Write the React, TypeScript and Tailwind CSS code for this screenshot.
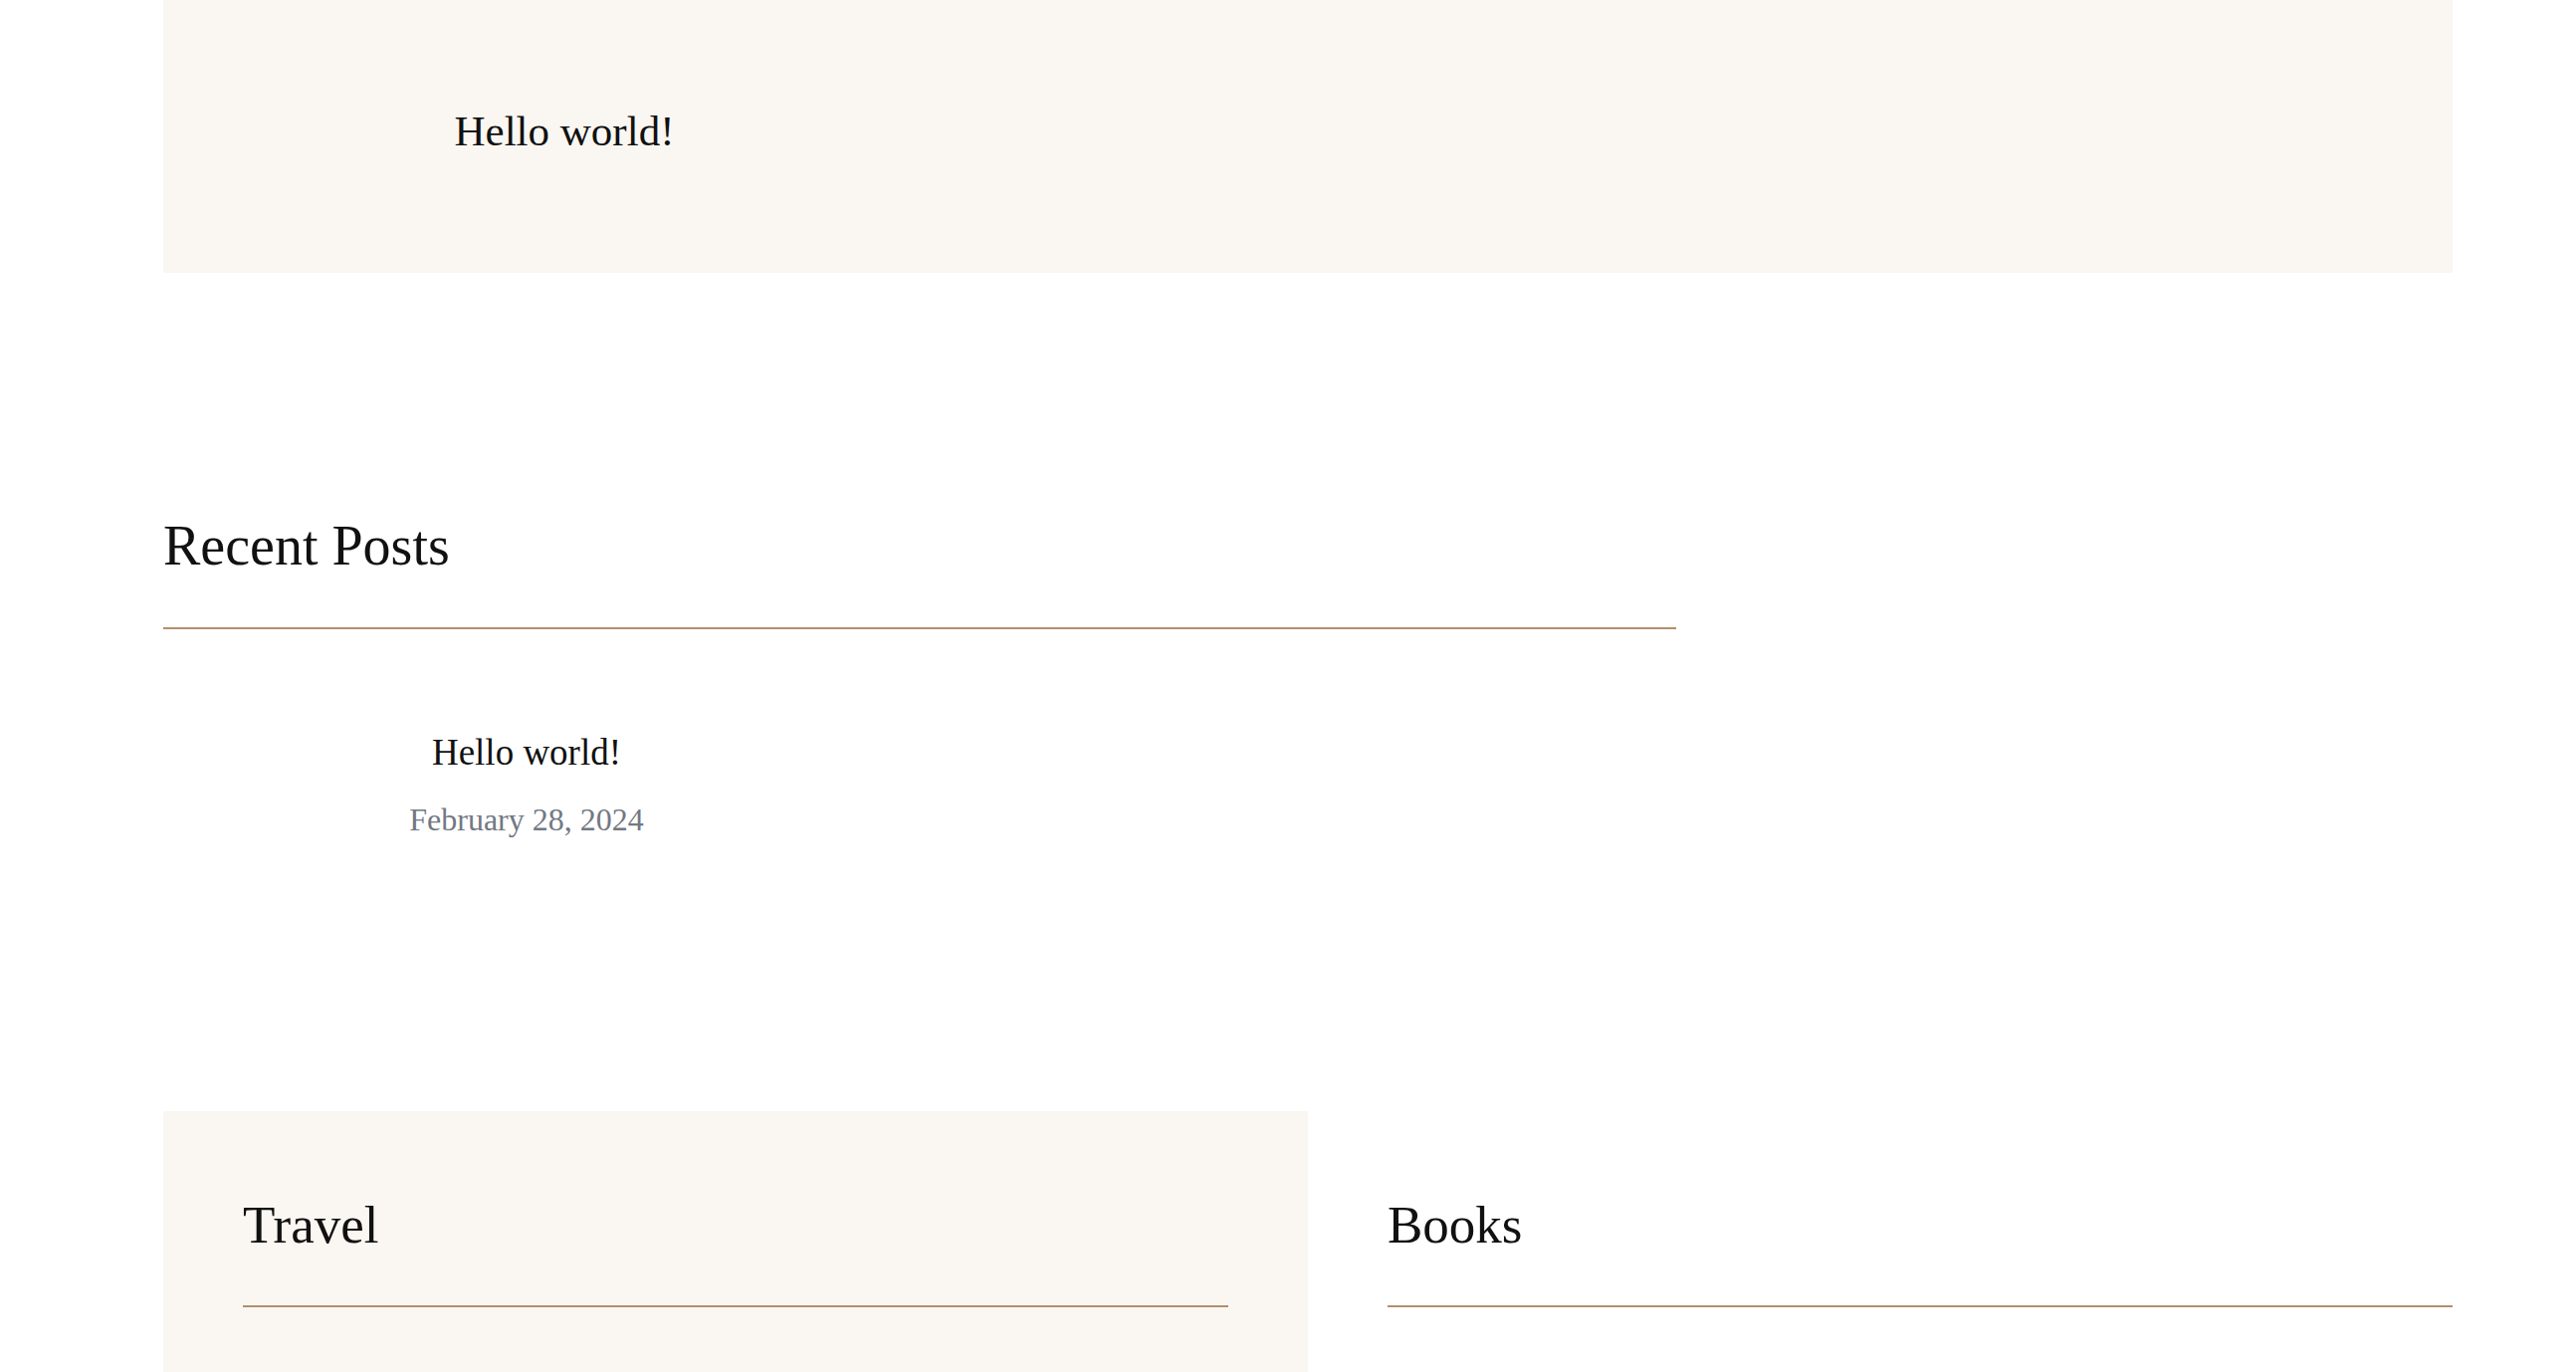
export default function App() {
  return (
    <div
      className="min-h-screen bg-white text-[#111111]"
      style={{ fontFamily: '"Liberation Serif", "DejaVu Serif", serif' }}
    >
      <div className="ml-[164px] w-[2300px]">
        {/* featured post */}
        <section className="h-[274px] bg-[#faf7f2] pt-[110px]">
          <div className="w-[806px] text-center text-[43px] leading-none">Hello world!</div>
        </section>

        {/* recent posts */}
        <section className="w-[1520px] pt-[246px]">
          <h2 className="text-[56px] leading-none font-normal">Recent Posts</h2>
          <div className="mt-[54px] h-[2px] bg-[#b48e6c]" />
          <div className="mt-[105px] w-[730px] text-center">
            <h3 className="text-[37px] leading-none font-normal">Hello world!</h3>
            <p className="mt-[33px] text-[32px] leading-none text-[#737883]">February 28, 2024</p>
          </div>
        </section>

        {/* categories */}
        <div className="mt-[277px] grid grid-cols-2">
          <div className="bg-[#faf7f2] px-[80px] pt-[88px] pb-[120px]">
            <h2 className="text-[53px] leading-none font-normal">Travel</h2>
            <div className="mt-[54px] h-[2px] bg-[#b48e6c]" />
          </div>
          <div className="pl-[80px] pt-[88px] pb-[120px]">
            <h2 className="text-[53px] leading-none font-normal">Books</h2>
            <div className="mt-[54px] h-[2px] bg-[#b48e6c]" />
          </div>
        </div>
      </div>
    </div>
  );
}
